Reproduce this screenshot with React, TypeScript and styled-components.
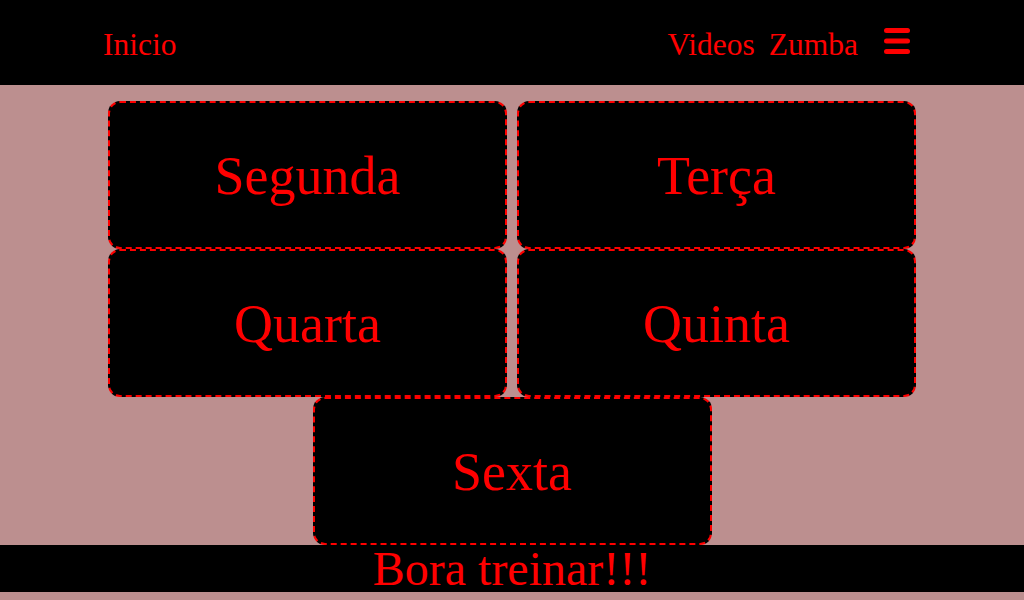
import React from "react";
import styled, { createGlobalStyle } from "styled-components";

const Global = createGlobalStyle`
  html, body { margin: 0; padding: 0; background: #bc8f8f; }
  body { font-family: "Liberation Serif", "Times New Roman", serif; }
`;

const Page = styled.div`
  width: 1024px;
  min-height: 600px;
  background: #bc8f8f;
  display: flex;
  flex-direction: column;
`;

const Header = styled.header`
  height: 85px;
  background: #000;
  display: flex;
  align-items: center;
  justify-content: space-between;
  padding: 4px 114px 0 103px;
  box-sizing: border-box;
`;

const NavLink = styled.a`
  color: #ff0000;
  font-size: 31.5px;
  text-decoration: none;
  line-height: 1;
`;

const RightNav = styled.nav`
  display: flex;
  align-items: center;
  gap: 14px;
`;

const MenuIcon = styled.svg`
  margin-left: 12px;
  width: 26px;
  height: 26px;
  margin-top: -8px;
`;

const Main = styled.main`
  padding: 16px 0 0;
  display: grid;
  grid-template-columns: 399px 399px;
  column-gap: 10px;
  justify-content: center;
`;

const Card = styled.div<{ $span?: boolean }>`
  height: 148px;
  box-sizing: border-box;
  background: #000;
  border: 2px dashed #ff0000;
  border-radius: 12px;
  display: flex;
  align-items: center;
  justify-content: center;
  padding-top: 1px;
  color: #ff0000;
  font-size: 54px;
  ${(p) => (p.$span ? "grid-column: 1 / span 2; justify-self: center; width: 399px;" : "")}
`;

const Footer = styled.footer`
  height: 47px;
  background: #000;
  color: #ff0000;
  font-size: 48px;
  display: flex;
  align-items: center;
  justify-content: center;
  line-height: 1;
`;

export default function App() {
  const days = ["Segunda", "Terça", "Quarta", "Quinta"];
  return (
    <>
      <Global />
      <Page>
        <Header>
          <NavLink href="#">Inicio</NavLink>
          <RightNav>
            <NavLink href="#">Videos</NavLink>
            <NavLink href="#">Zumba</NavLink>
            <MenuIcon viewBox="0 0 26 26">
              <rect x="0" y="0" width="26" height="5" rx="2.5" fill="#ff0000" />
              <rect x="0" y="10.5" width="26" height="5" rx="2.5" fill="#ff0000" />
              <rect x="0" y="21" width="26" height="5" rx="2.5" fill="#ff0000" />
            </MenuIcon>
          </RightNav>
        </Header>
        <Main>
          {days.map((d) => (
            <Card key={d}>{d}</Card>
          ))}
          <Card $span>Sexta</Card>
        </Main>
        <Footer>Bora treinar!!!</Footer>
      </Page>
    </>
  );
}
